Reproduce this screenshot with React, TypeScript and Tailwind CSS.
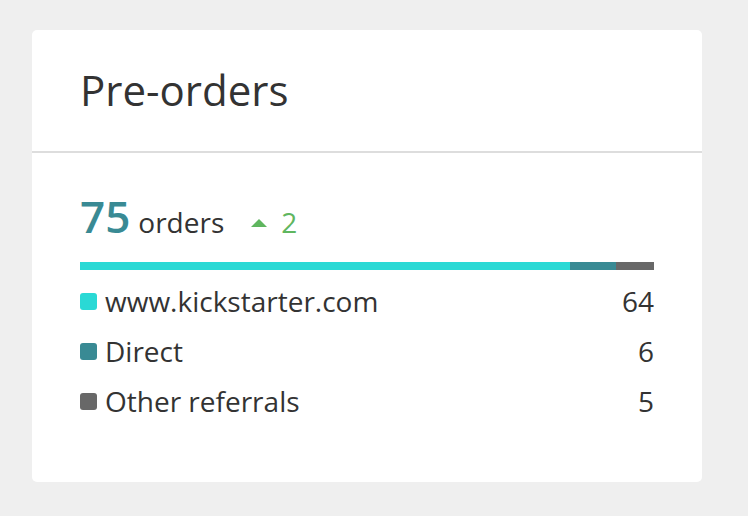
import React from "react";

const sources = [
  { label: "www.kickstarter.com", count: 64, color: "bg-[#2ad9d5]" },
  { label: "Direct", count: 6, color: "bg-[#398a94]" },
  { label: "Other referrals", count: 5, color: "bg-[#686868]" },
];

export default function App() {
  const total = sources.reduce((sum, s) => sum + s.count, 0);

  return (
    <div
      className="min-h-[516px] w-full bg-[#efefef] px-8 pt-[30px]"
      style={{ fontFamily: '"Open Sans", sans-serif' }}
    >
      <div className="w-[670px] rounded-[5px] bg-white">
        {/* Header */}
        <div className="border-b-2 border-[#dddddd] px-12 pt-[39px] pb-[40px]">
          <h2 className="text-[42px] leading-[42px] text-[#333333]">Pre-orders</h2>
        </div>

        <div className="px-12 pt-[39px] pb-[64px]">
          {/* Total */}
          <div className="flex items-baseline leading-[48px]">
            <span className="text-[44px] font-semibold text-[#398a94]">{total}</span>
            <span className="ml-2 text-[28px] text-[#333333]">orders</span>
            <span className="ml-[27px] flex items-baseline text-[28px] text-[#5fb65f]">
              <svg width="16" height="8" viewBox="0 0 16 8" className="mr-[14px] -translate-y-[6px]">
                <path d="M8 0 L16 8 L0 8 Z" fill="#5fb65f" />
              </svg>
              2
            </span>
          </div>

          {/* Stacked bar */}
          <div className="mt-[16px] flex h-2 w-full">
            {sources.map((s) => (
              <div key={s.label} className={s.color} style={{ width: `${(s.count / total) * 100}%` }} />
            ))}
          </div>

          {/* Legend */}
          <div className="mt-[14px] flex flex-col gap-[16px]">
            {sources.map((s) => (
              <div key={s.label} className="flex items-center text-[28px] leading-[34px] text-[#333333]">
                <span className={`mr-2 h-[17px] w-[17px] rounded-[3px] ${s.color}`} />
                <span className="flex-1">{s.label}</span>
                <span>{s.count}</span>
              </div>
            ))}
          </div>
        </div>
      </div>
    </div>
  );
}
